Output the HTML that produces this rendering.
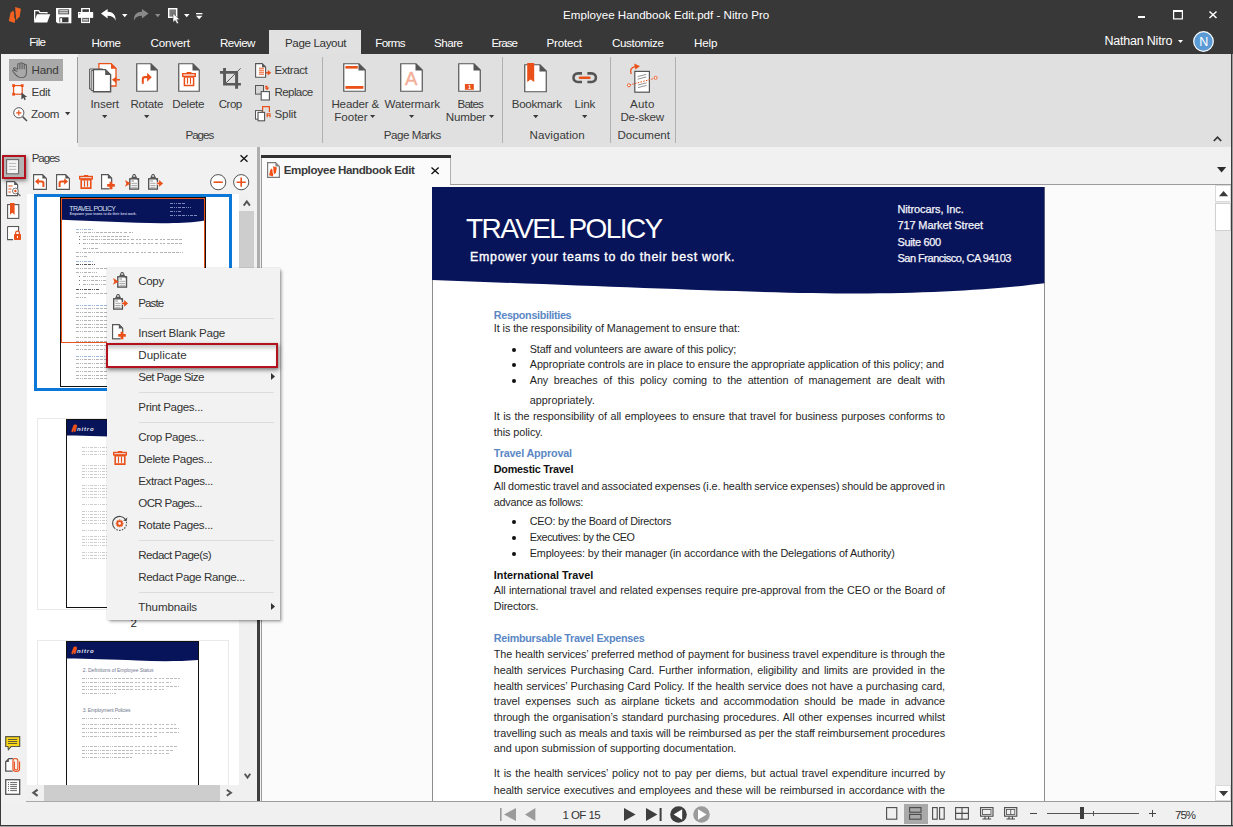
<!DOCTYPE html>
<html><head><meta charset="utf-8"><title>Employee Handbook Edit.pdf - Nitro Pro</title>
<style>
*{box-sizing:border-box;margin:0;padding:0}
html,body{width:1233px;height:827px;overflow:hidden;background:#f1f1f1;font-family:"Liberation Sans",sans-serif;font-size:12px;color:#333}
.a{position:absolute}
.t{position:absolute;white-space:nowrap;line-height:1}
svg{overflow:visible}
</style></head><body>
<div class="a" style="left:0px;top:0px;width:1233px;height:53.6px;background:#383838;"></div>
<div class="t" style="left:563.10px;top:9.00px;font-size:11.6px;color:#ffffff;">Employee Handbook Edit.pdf - Nitro Pro</div>
<div class="t" style="left:29.30px;top:36.00px;font-size:11.6px;color:#ffffff;letter-spacing:-0.664px;">File</div>
<div class="t" style="left:91.50px;top:37.00px;font-size:11.6px;color:#ffffff;letter-spacing:-0.481px;">Home</div>
<div class="t" style="left:150.50px;top:37.00px;font-size:11.6px;color:#ffffff;letter-spacing:-0.186px;">Convert</div>
<div class="t" style="left:220.00px;top:37.00px;font-size:11.6px;color:#ffffff;letter-spacing:-0.507px;">Review</div>
<div class="a" style="left:269px;top:30px;width:92px;height:24px;background:#e1e1e1;"></div>
<div class="t" style="left:285.00px;top:37.00px;font-size:11.6px;color:#333;letter-spacing:-0.364px;">Page Layout</div>
<div class="t" style="left:375.30px;top:37.00px;font-size:11.6px;color:#ffffff;letter-spacing:-0.641px;">Forms</div>
<div class="t" style="left:434.00px;top:37.00px;font-size:11.6px;color:#ffffff;letter-spacing:-0.489px;">Share</div>
<div class="t" style="left:491.50px;top:37.00px;font-size:11.6px;color:#ffffff;letter-spacing:-0.951px;">Erase</div>
<div class="t" style="left:546.50px;top:37.00px;font-size:11.6px;color:#ffffff;letter-spacing:-0.208px;">Protect</div>
<div class="t" style="left:612.00px;top:37.00px;font-size:11.6px;color:#ffffff;letter-spacing:-0.349px;">Customize</div>
<div class="t" style="left:694.00px;top:37.00px;font-size:11.6px;color:#ffffff;letter-spacing:-0.119px;">Help</div>
<div class="t" style="left:1104.40px;top:35.00px;font-size:12.5px;color:#ffffff;letter-spacing:-0.197px;">Nathan Nitro</div>
<svg class="a" style="left:1178px;top:39.5px;" width="5" height="3" viewBox="0 0 5 3"><path d="M0 0H5 L2.5 3Z" fill="#ffffff"/></svg>
<svg class="a" style="left:1193px;top:30.5px;" width="21" height="21" viewBox="0 0 21 21"><circle cx="10.5" cy="10.5" r="9.8" fill="#5b9bd5" stroke="#fff" stroke-width="1.2"/></svg>
<div class="t" style="left:1199.30px;top:36.00px;font-size:12.5px;color:#ffffff;">N</div>
<div class="a" style="left:1138px;top:15.5px;width:6.5px;height:2.5px;background:#ffffff;"></div>
<svg class="a" style="left:1172.5px;top:10px;" width="10" height="9.5" viewBox="0 0 10 9.5"><rect x="0.6" y="1" width="8.8" height="7.9" fill="none" stroke="#fff" stroke-width="1.2"/><rect x="0" y="0" width="10" height="2" fill="#fff"/></svg>
<svg class="a" style="left:1209px;top:10.5px;" width="8" height="7.5" viewBox="0 0 8 7.5"><path d="M0.5 0.5L7.5 7M7.5 0.5L0.5 7" stroke="#fff" stroke-width="1.5" fill="none"/></svg>
<div class="a" style="left:0px;top:54px;width:1233px;height:93px;background:#e0e0e0;"></div>
<div class="a" style="left:0px;top:54px;width:78px;height:93px;background:#f2f2f2;"></div>
<div class="a" style="left:77px;top:57px;width:1px;height:86px;background:#9c9c9c;"></div>
<div class="a" style="left:322px;top:57px;width:1px;height:86px;background:#b0b0b0;"></div>
<div class="a" style="left:502px;top:57px;width:1px;height:86px;background:#b0b0b0;"></div>
<div class="a" style="left:610px;top:57px;width:1px;height:86px;background:#b0b0b0;"></div>
<div class="a" style="left:675px;top:57px;width:1px;height:86px;background:#b0b0b0;"></div>
<div class="a" style="left:9px;top:59px;width:54px;height:21.8px;background:#a9a9a9;"></div>
<div class="t" style="left:31.50px;top:64.00px;font-size:11.6px;color:#3a3a3a;letter-spacing:-0.177px;">Hand</div>
<div class="t" style="left:31.50px;top:86.00px;font-size:11.6px;color:#3a3a3a;letter-spacing:-0.296px;">Edit</div>
<div class="t" style="left:31.00px;top:108.00px;font-size:11.6px;color:#3a3a3a;letter-spacing:-0.384px;">Zoom</div>
<svg class="a" style="left:64.95px;top:112px;" width="5.3" height="3.15" viewBox="0 0 5.3 3.15"><path d="M0 0H5.3 L2.65 3.15Z" fill="#3a3a3a"/></svg>
<div class="t" style="left:90.50px;top:98.00px;font-size:11.6px;color:#3a3a3a;letter-spacing:-0.102px;">Insert</div>
<svg class="a" style="left:101.8px;top:115.2px;" width="5.4" height="3.2" viewBox="0 0 5.4 3.2"><path d="M0 0H5.4 L2.7 3.2Z" fill="#3a3a3a"/></svg>
<div class="t" style="left:130.40px;top:98.00px;font-size:11.6px;color:#3a3a3a;letter-spacing:-0.215px;">Rotate</div>
<svg class="a" style="left:143.7px;top:115.2px;" width="5.4" height="3.2" viewBox="0 0 5.4 3.2"><path d="M0 0H5.4 L2.7 3.2Z" fill="#3a3a3a"/></svg>
<div class="t" style="left:172.30px;top:98.00px;font-size:11.6px;color:#3a3a3a;letter-spacing:-0.266px;">Delete</div>
<div class="t" style="left:218.70px;top:98.00px;font-size:11.6px;color:#3a3a3a;letter-spacing:-0.515px;">Crop</div>
<div class="t" style="left:185.40px;top:129.00px;font-size:11.6px;color:#3a3a3a;letter-spacing:-0.998px;">Pages</div>
<div class="t" style="left:274.50px;top:64.00px;font-size:11.6px;color:#3a3a3a;letter-spacing:-0.466px;">Extract</div>
<div class="t" style="left:274.50px;top:86.00px;font-size:11.6px;color:#3a3a3a;letter-spacing:-0.627px;">Replace</div>
<div class="t" style="left:274.50px;top:108.00px;font-size:11.6px;color:#3a3a3a;letter-spacing:-0.142px;">Split</div>
<div class="t" style="left:331.40px;top:98.00px;font-size:11.6px;color:#3a3a3a;letter-spacing:-0.158px;">Header &amp;</div>
<div class="t" style="left:334.30px;top:111.00px;font-size:11.6px;color:#3a3a3a;letter-spacing:-0.045px;">Footer</div>
<svg class="a" style="left:370.2px;top:115px;" width="5.2" height="3.1" viewBox="0 0 5.2 3.1"><path d="M0 0H5.2 L2.6 3.1Z" fill="#3a3a3a"/></svg>
<div class="t" style="left:384.50px;top:98.00px;font-size:11.6px;color:#3a3a3a;letter-spacing:-0.098px;">Watermark</div>
<svg class="a" style="left:408.9px;top:115px;" width="5.2" height="3.1" viewBox="0 0 5.2 3.1"><path d="M0 0H5.2 L2.6 3.1Z" fill="#3a3a3a"/></svg>
<div class="t" style="left:457.50px;top:98.00px;font-size:11.6px;color:#3a3a3a;letter-spacing:-0.841px;">Bates</div>
<div class="t" style="left:445.80px;top:111.00px;font-size:11.6px;color:#3a3a3a;letter-spacing:-0.212px;">Number</div>
<svg class="a" style="left:489px;top:115px;" width="5.2" height="3.1" viewBox="0 0 5.2 3.1"><path d="M0 0H5.2 L2.6 3.1Z" fill="#3a3a3a"/></svg>
<div class="t" style="left:383.80px;top:129.00px;font-size:11.6px;color:#3a3a3a;letter-spacing:-0.477px;">Page Marks</div>
<div class="t" style="left:511.70px;top:98.00px;font-size:11.6px;color:#3a3a3a;letter-spacing:-0.274px;">Bookmark</div>
<svg class="a" style="left:532.8px;top:115.2px;" width="5.4" height="3.2" viewBox="0 0 5.4 3.2"><path d="M0 0H5.4 L2.7 3.2Z" fill="#3a3a3a"/></svg>
<div class="t" style="left:574.50px;top:98.00px;font-size:11.6px;color:#3a3a3a;letter-spacing:-0.193px;">Link</div>
<svg class="a" style="left:581.7px;top:115.2px;" width="5.4" height="3.2" viewBox="0 0 5.4 3.2"><path d="M0 0H5.4 L2.7 3.2Z" fill="#3a3a3a"/></svg>
<div class="t" style="left:529.60px;top:129.00px;font-size:11.6px;color:#3a3a3a;letter-spacing:0.032px;">Navigation</div>
<div class="t" style="left:630.00px;top:98.00px;font-size:11.6px;color:#3a3a3a;letter-spacing:0.212px;">Auto</div>
<div class="t" style="left:620.40px;top:111.00px;font-size:11.6px;color:#3a3a3a;letter-spacing:-0.220px;">De-skew</div>
<div class="t" style="left:617.50px;top:129.00px;font-size:11.6px;color:#3a3a3a;letter-spacing:-0.053px;">Document</div>
<svg class="a" style="left:8px;top:6px;" width="14" height="17" viewBox="0 0 14 17"><path d="M7.1 1.05L12.9 2.8L11.7 10.5L8.3 14L7.7 8.6Z" fill="#f26322"/><path d="M5.1 4.5L2.5 6.7L0.8 14.9L6.6 16.9L7.3 13.5L6.1 10.5L6.2 7.1Z" fill="#f26322"/></svg>
<svg class="a" style="left:33.8px;top:9.7px;" width="16.4" height="12.6" viewBox="0 0 16.4 12.6"><path d="M0 12.4V0H4.9L6.3 2H13.6V3.6H12.2V3.2H5.6L4.3 1.3H1.3V9.6Z" fill="#fff"/><path d="M0 12.4L3 4.3H16.3L13.2 12.4Z" fill="#fff"/></svg>
<svg class="a" style="left:55.7px;top:7.7px;" width="15.4" height="15.3" viewBox="0 0 15.4 15.3"><path d="M0 0H15.4V15.3H1.6L0 13.7Z" fill="#fff"/><rect x="2.4" y="1.4" width="10.7" height="4.9" fill="#383838"/><rect x="3.2" y="2.3" width="9.1" height="1.1" fill="#fff"/><rect x="3.2" y="4.3" width="9.1" height="1.1" fill="#fff"/><rect x="3.4" y="9.3" width="9.1" height="5" fill="#383838"/><rect x="4.2" y="10.2" width="1.9" height="4.1" fill="#fff"/></svg>
<svg class="a" style="left:77.9px;top:7.9px;" width="15.2" height="15.1" viewBox="0 0 15.2 15.1"><rect x="3.1" y="0" width="8.9" height="4.6" fill="#fff"/><rect x="4.4" y="1.3" width="6.5" height="2.6" fill="#383838"/><rect x="0" y="4" width="15.2" height="5.9" fill="#fff"/><rect x="1.2" y="5.2" width="1" height="1" fill="#383838"/><rect x="3.1" y="8.6" width="8.9" height="6.5" fill="#fff"/><rect x="4.4" y="9.9" width="6.5" height="4" fill="#383838"/><rect x="5" y="10.8" width="5.3" height="0.9" fill="#fff"/><rect x="5" y="12.5" width="5.3" height="0.9" fill="#fff"/></svg>
<svg class="a" style="left:100.5px;top:9.4px;" width="15.5" height="12" viewBox="0 0 15.5 12"><path d="M0 4.6L6.6 0V2.8C11.5 2.8 15 5.8 14.6 11.8C13.6 8.4 10.6 6.8 6.6 6.8V9.4Z" fill="#fff"/></svg>
<svg class="a" style="left:121.85px;top:13.5px;" width="5.5" height="3.25" viewBox="0 0 5.5 3.25"><path d="M0 0H5.5 L2.75 3.25Z" fill="#fff"/></svg>
<svg class="a" style="left:132.5px;top:9.4px;" width="15.5" height="12" viewBox="0 0 15.5 12"><path d="M15.5 4.6L8.9 0V2.8C4 2.8 0.5 5.8 0.9 11.8C1.9 8.4 4.9 6.8 8.9 6.8V9.4Z" fill="#8a8a8a"/></svg>
<svg class="a" style="left:154.65px;top:13.5px;" width="5.5" height="3.25" viewBox="0 0 5.5 3.25"><path d="M0 0H5.5 L2.75 3.25Z" fill="#8a8a8a"/></svg>
<svg class="a" style="left:167.8px;top:7.7px;" width="12.5" height="16.3" viewBox="0 0 12.5 16.3"><rect x="0.7" y="0.7" width="8" height="8.6" fill="#7a7a7a" stroke="#fff" stroke-width="1.4"/><path d="M5 5.4L5 14.2L7.2 12.4L9 15.8L10.6 15L8.9 11.7L11.6 11.4Z" fill="#fff" stroke="#383838" stroke-width="0.5"/></svg>
<svg class="a" style="left:184.05px;top:13.5px;" width="5.5" height="3.25" viewBox="0 0 5.5 3.25"><path d="M0 0H5.5 L2.75 3.25Z" fill="#fff"/></svg>
<svg class="a" style="left:195.6px;top:12.6px;" width="6.4" height="6.4" viewBox="0 0 6.4 6.4"><rect x="0" y="0" width="6.4" height="1.3" fill="#fff"/><path d="M0 2.8H6.4L3.2 6.2Z" fill="#fff"/></svg>
<svg class="a" style="left:12.4px;top:61.6px;" width="15" height="17" viewBox="0 0 15 17"><path transform="scale(1.36,0.99)" d="M3.6 9.6L1.6 7.4C0.6 6.6 1.2 5.4 2.4 6L4.2 7.6V2.6C4.2 1.4 5.8 1.4 5.8 2.6V1.6C5.8 0.4 7.4 0.4 7.4 1.6V2.2C7.4 1 9 1 9 2.2V3.2C9 2.2 10.6 2.2 10.6 3.4V10.6C10.6 14 9 15.8 6.8 15.8C4.6 15.8 3.2 14 1.8 11.4L0.6 9.2C0.2 8.2 1.4 7.6 2 8.6Z M5.8 2.6V7.4M7.4 2.2V7.4M9 3.2V7.4" fill="none" stroke="#5a5a5a" stroke-width="0.75" stroke-linejoin="round"/></svg>
<svg class="a" style="left:11.5px;top:84px;" width="17" height="17" viewBox="0 0 17 17"><rect x="1.6" y="1.6" width="8.6" height="8.6" fill="#fff" stroke="#e9501a" stroke-width="1.2"/><rect x="0.2" y="0.2" width="2.8" height="2.8" fill="#e9501a"/><rect x="8.8" y="0.2" width="2.8" height="2.8" fill="#e9501a"/><rect x="0.2" y="8.8" width="2.8" height="2.8" fill="#e9501a"/><path d="M9.4 8.4V15.6L11.4 13.8L12.6 16.2L13.8 15.6L12.7 13.3L15.2 13.1Z" fill="#4a4a4a"/></svg>
<svg class="a" style="left:12.5px;top:106.5px;" width="15" height="15" viewBox="0 0 15 15"><circle cx="5.8" cy="5.8" r="5.1" fill="#fff" stroke="#555" stroke-width="1"/><path d="M9.6 9.6L14 14" stroke="#555" stroke-width="1.6"/><path d="M3.2 5.8H8.4M5.8 3.2V8.4" stroke="#e9501a" stroke-width="1.2"/></svg>
<svg class="a" style="left:89px;top:62.6px;" width="31.5" height="29.5" viewBox="0 0 31.5 29.5"><path d="M9.9 0.7H22.2L27 5.5V23H9.9Z" fill="#fff" stroke="#e9501a" stroke-width="1.3"/><path d="M22 0.4L27.4 5.8H22Z" fill="#e9501a"/><path d="M0.6 6H14V26H0.6Z" fill="#fff" stroke="#555555" stroke-width="1"/><path d="M2.2 7.6H16V27.6H2.2Z" fill="#fff" stroke="#555555" stroke-width="1"/><path d="M4.4 6.6H16.4L21.6 11.8V28.7H4.4Z" fill="#fff" stroke="#555555" stroke-width="1.4"/><path d="M16.2 6.2L22 12H16.2Z" fill="#555555"/><path d="M22.9 16.8L27.4 13.4V16.1H31V17.5H27.4V20.2Z" fill="#e9501a"/></svg>
<svg class="a" style="left:136.2px;top:63px;" width="22" height="29" viewBox="0 0 22 29"><path d="M0.75 0.75H15 L21.25 7 V28.25 H0.75Z" fill="#fff" stroke="#555555" stroke-width="1.2"/><path d="M14.5 0.5 L21.5 7.5 H14.5Z" fill="#555555"/><path d="M5.8 20.8V16.3C5.8 14 6.8 13 9 13H11.1V9.8L15.8 14.3L11.1 18.8V15.2H9.2C8.2 15.2 7.8 15.6 7.8 16.6V20.8Z" fill="#e9501a"/></svg>
<svg class="a" style="left:178px;top:63px;" width="22" height="29" viewBox="0 0 22 29"><path d="M0.75 0.75H15 L21.25 7 V28.25 H0.75Z" fill="#fff" stroke="#555555" stroke-width="1.2"/><path d="M14.5 0.5 L21.5 7.5 H14.5Z" fill="#555555"/><path d="M8.6 9H13.4V10.4H8.6Z" fill="#e9501a"/><rect x="4.7" y="10.7" width="12.6" height="2.6" fill="none" stroke="#e9501a" stroke-width="1.4"/><path d="M6.4 14H15.6V22.4H6.4Z" fill="none" stroke="#e9501a" stroke-width="1.5"/><path d="M9.5 15V20.8M12.5 15V20.8" stroke="#e9501a" stroke-width="1.1"/></svg>
<svg class="a" style="left:220px;top:68px;" width="21" height="21" viewBox="0 0 21 21"><path d="M3.1 0H6V15H20.9V17.6H3.1Z M0 3.1H18.1V20.8H15.1V5.8H0Z" fill="#595959"/><path d="M6.2 14.8L20.6 0.3" stroke="#595959" stroke-width="1"/></svg>
<svg class="a" style="left:255px;top:63.3px;" width="17" height="14.8" viewBox="0 0 17 14.8"><path d="M0.6 0.6H7.2L10.6 4V14.2H0.6Z" fill="#fff" stroke="#555555" stroke-width="1.1"/><path d="M7 0.4L10.8 4.2H7Z" fill="#555555"/><path d="M4 5.2H9M4 7.2H9M4 9.2H9M4 11.2H9" stroke="#e9501a" stroke-width="1"/><path d="M10.8 8.9H12.8V6.9L16.2 9.7L12.8 12.5V10.5H10.8Z" fill="#e9501a"/></svg>
<svg class="a" style="left:255px;top:84.5px;" width="15.5" height="15.5" viewBox="0 0 15.5 15.5"><rect x="0.5" y="0.5" width="8" height="8.6" fill="#d6d6d6" stroke="#555555" stroke-width="1"/><rect x="6.2" y="6.6" width="8.2" height="8.4" fill="#fff" stroke="#555555" stroke-width="1.1"/><path d="M10 0.8H12.6V2.6H14.4L12 5.2L9.6 2.6H11.4V2H10Z" fill="#e9501a"/></svg>
<svg class="a" style="left:255px;top:106.4px;" width="16.5" height="15.2" viewBox="0 0 16.5 15.2"><path d="M7.6 6V0.6H14.4V6" fill="none" stroke="#e9501a" stroke-width="1.2"/><rect x="0.5" y="4.6" width="6.6" height="8.6" fill="#fff" stroke="#555555" stroke-width="1"/><rect x="3" y="6.4" width="6.6" height="8.4" fill="#fff" stroke="#555555" stroke-width="1.1"/><path d="M11.6 7.2H15.6V11.2H14.4V9.8H12.8V11.2H11.6Z M12.8 8.2V8.9H14.4V8.2Z" fill="#e9501a" fill-rule="evenodd"/></svg>
<svg class="a" style="left:343px;top:63px;" width="23" height="29" viewBox="0 0 23 29"><path d="M0.75 0.75H16 L22.25 7 V28.25 H0.75Z" fill="#fff" stroke="#555555" stroke-width="1.2"/><path d="M15.5 0.5 L22.5 7.5 H15.5Z" fill="#555555"/><rect x="2.4" y="3" width="12.4" height="2.6" fill="#e9501a"/><rect x="2.4" y="23" width="18" height="2.8" fill="#e9501a"/></svg>
<svg class="a" style="left:400px;top:63px;" width="23" height="29" viewBox="0 0 23 29"><path d="M0.75 0.75H16 L22.25 7 V28.25 H0.75Z" fill="#fff" stroke="#555555" stroke-width="1.2"/><path d="M15.5 0.5 L22.5 7.5 H15.5Z" fill="#555555"/></svg>
<div class="t" style="left:405.00px;top:70.00px;font-size:18.6px;color:#f4ae98;-webkit-text-stroke:0.45px #f4ae98;">A</div>
<svg class="a" style="left:458px;top:63px;" width="23" height="29" viewBox="0 0 23 29"><path d="M0.75 0.75H16 L22.25 7 V28.25 H0.75Z" fill="#fff" stroke="#555555" stroke-width="1.2"/><path d="M15.5 0.5 L22.5 7.5 H15.5Z" fill="#555555"/><rect x="6.9" y="21" width="8.9" height="5.8" fill="#e9501a"/></svg>
<div class="t" style="left:467.90px;top:85.00px;font-size:5.6px;color:#fff;font-weight:bold;">1</div>
<svg class="a" style="left:524px;top:64px;" width="23" height="28.5" viewBox="0 0 23 28.5"><path d="M0.75 0.75H16 L22.25 7 V27.75 H0.75Z" fill="#fff" stroke="#555555" stroke-width="1.2"/><path d="M15.5 0.5 L22.5 7.5 H15.5Z" fill="#555555"/><path d="M3.2 -1H10.2V18L6.7 15.4L3.2 18Z" fill="#e9501a"/></svg>
<svg class="a" style="left:571.8px;top:71.8px;" width="25.4" height="11.4" viewBox="0 0 25.4 11.4"><path d="M10 1.4H6C0 1.4 0 10 6 10H10M15.4 1.4H19.4C25.4 1.4 25.4 10 19.4 10H15.4" fill="none" stroke="#555" stroke-width="2.6"/><path d="M8 5.7H17.4" stroke="#e9501a" stroke-width="2.6" stroke-linecap="round"/></svg>
<svg class="a" style="left:627px;top:62.5px;" width="31" height="30" viewBox="0 0 31 30"><rect x="7.8" y="8.4" width="14.6" height="20.8" fill="#fff" stroke="#555555" stroke-width="1.2"/><path d="M10.6 13.6L19.2 11.4M10.6 16.2L19.2 14M11 22L19.6 19.8M11 24.6L19.6 22.4" stroke="#777" stroke-width="0.8"/><path d="M2.6 22L28.2 15.2" stroke="#e9501a" stroke-width="1" stroke-dasharray="1.6 1.2"/><circle cx="1.9" cy="22.3" r="1.5" fill="#fff" stroke="#e9501a" stroke-width="0.9"/><circle cx="28.6" cy="14.8" r="1.5" fill="#fff" stroke="#e9501a" stroke-width="0.9"/><path d="M4.2 11C2.6 7 4.4 4.2 8 3.6" fill="none" stroke="#e9501a" stroke-width="1.4"/><path d="M7.2 0.6L13 3.2L8.2 6.6Z" fill="#e9501a"/></svg>
<svg class="a" style="left:1212.5px;top:135.5px;" width="9" height="5.5" viewBox="0 0 9 5.5"><path d="M0.8 5L4.5 1.2L8.2 5" fill="none" stroke="#333" stroke-width="1.7"/></svg>
<div class="a" style="left:26.5px;top:194px;width:212.5px;height:590.5px;background:#ffffff;"></div>
<div class="a" style="left:2.3px;top:155.3px;width:23.6px;height:23.4px;background:#b4b4b4;border:2px solid #b3111d;box-shadow:1px 2px 4px rgba(0,0,0,.45)"></div>
<svg class="a" style="left:6px;top:159.3px;" width="13.2" height="15.4" viewBox="0 0 13.2 15.4"><rect x="0.6" y="0.6" width="12" height="14.2" fill="#f4f4f4" stroke="#6a6a6a" stroke-width="1.1"/><path d="M3 4.4H10.2M3 7.4H10.2M3 10.4H10.2" stroke="#b9b9b9" stroke-width="1"/></svg>
<svg class="a" style="left:6px;top:181.3px;" width="15" height="16" viewBox="0 0 15 16"><path d="M0.6 0.6H8.4L11.6 3.8V14.6H0.6Z" fill="#fff" stroke="#555555" stroke-width="1.1"/><path d="M8.2 0.4L11.8 4H8.2Z" fill="#555555"/><path d="M2.4 5H6.6M2.4 8H5.4M2.4 11H5" stroke="#e9501a" stroke-width="1.2"/><circle cx="9.4" cy="10" r="2.9" fill="#fff" stroke="#666" stroke-width="0.9"/><circle cx="9.4" cy="10" r="1.2" fill="#e9501a"/><path d="M11.6 12.2L14.4 15" stroke="#666" stroke-width="1.2"/></svg>
<svg class="a" style="left:7px;top:203px;" width="12.4" height="16" viewBox="0 0 12.4 16"><rect x="0.6" y="1.6" width="11.2" height="13.8" fill="#fff" stroke="#555555" stroke-width="1.1"/><path d="M3 0H7.6V11.8L5.3 9.8L3 11.8Z" fill="#e9501a"/></svg>
<svg class="a" style="left:7px;top:226px;" width="14.5" height="14.5" viewBox="0 0 14.5 14.5"><path d="M0.6 0.6H11.6V6M6 13.6H0.6V0.6" fill="#fff" stroke="#555555" stroke-width="1.1"/><rect x="1.2" y="1.2" width="9.8" height="11.8" fill="#fff"/><rect x="7" y="8" width="7" height="6" rx="0.8" fill="#e9501a"/><path d="M8.6 8V6.8C8.6 4.6 12.4 4.6 12.4 6.8V8" fill="none" stroke="#e9501a" stroke-width="1.2"/><rect x="10" y="10" width="1" height="2" fill="#fff"/></svg>
<svg class="a" style="left:5px;top:736px;" width="15.4" height="14" viewBox="0 0 15.4 14"><path d="M0.7 0.7H14.7V10.5H6L3.4 13.6L3 10.5H0.7Z" fill="#f9d616" stroke="#5a5a4a" stroke-width="1.2" stroke-linejoin="miter"/><path d="M3 3.5H12.2M3 5.5H12.2M3 7.5H12.2" stroke="#5e5a35" stroke-width="1"/></svg>
<svg class="a" style="left:5px;top:757.8px;" width="15.4" height="14.2" viewBox="0 0 15.4 14.2"><path d="M8 13.2H0.7V3.8L3.8 0.7H8Z" fill="#fff"/><path d="M7.6 13.2H0.7V3.8L3.8 0.7H8" fill="none" stroke="#555555" stroke-width="1.3"/><path d="M0.6 3.9L3.9 0.6V3.9Z" fill="#555555"/><path d="M9.4 3.6V10.6C9.4 12.4 12.9 12.4 12.9 10.6V3C12.9 -0.3 7.9 -0.3 7.9 3V10.8C7.9 14.4 14.6 14.4 14.6 10.8V3.6" fill="none" stroke="#e9501a" stroke-width="1.1"/></svg>
<svg class="a" style="left:5px;top:779px;" width="15.4" height="16" viewBox="0 0 15.4 16"><rect x="0.7" y="0.7" width="14" height="14.6" fill="#fff" stroke="#555555" stroke-width="1.3"/><path d="M5.2 3.6H12M5.2 5.6H12M5.2 7.6H12M5.2 9.6H12M5.2 11.6H12" stroke="#555555" stroke-width="0.9"/><path d="M3 3.6H4M3 5.6H4M3 7.6H4M3 9.6H4M3 11.6H4" stroke="#555555" stroke-width="0.9"/></svg>
<div class="t" style="left:31.70px;top:152.00px;font-size:11.6px;color:#3a3a3a;letter-spacing:-1.098px;">Pages</div>
<svg class="a" style="left:240px;top:155.2px;" width="8" height="7" viewBox="0 0 8 7"><path d="M0.5 0.3L7.5 6.7M7.5 0.3L0.5 6.7" stroke="#111" stroke-width="1.3" fill="none"/></svg>
<svg class="a" style="left:33.2px;top:174px;" width="14" height="16" viewBox="0 0 14 16"><path d="M0.6 0.6H9.6L13.4 4.4V15.4H0.6Z" fill="#fff" stroke="#555555" stroke-width="1.1"/><path d="M9.4 0.4L13.6 4.6H9.4Z" fill="#555555"/><path d="M2 7.6L5.8 4.2V6.4H8.6C10.6 6.4 11.4 7.4 11.4 9V13H9.4V9.4C9.4 8.6 9.2 8.4 8.4 8.4H5.8V10.8Z" fill="#e9501a"/></svg>
<svg class="a" style="left:56.2px;top:174px;" width="14" height="16" viewBox="0 0 14 16"><path d="M0.6 0.6H9.6L13.4 4.4V15.4H0.6Z" fill="#fff" stroke="#555555" stroke-width="1.1"/><path d="M9.4 0.4L13.6 4.6H9.4Z" fill="#555555"/><path d="M12 7.6L8.2 4.2V6.4H5.4C3.4 6.4 2.6 7.4 2.6 9V13H4.6V9.4C4.6 8.6 4.8 8.4 5.6 8.4H8.2V10.8Z" fill="#e9501a"/></svg>
<svg class="a" style="left:79.2px;top:175px;" width="14" height="14" viewBox="0 0 14 14"><path d="M4.8 0H9.2V1.4H4.8Z" fill="#e9501a"/><rect x="0.7" y="1.5" width="12.6" height="2.4" fill="none" stroke="#e9501a" stroke-width="1.4"/><path d="M2.2 4.6H11.8V13.1H2.2Z" fill="none" stroke="#e9501a" stroke-width="1.6"/><path d="M5.5 5.6V11.8M8.5 5.6V11.8" stroke="#e9501a" stroke-width="1.1"/></svg>
<svg class="a" style="left:101px;top:174px;" width="13.6" height="15.6" viewBox="0 0 13.6 15.6"><path d="M8.6 14.8H0.6V0.6H7L10.6 4.2V8" fill="none" stroke="#555555" stroke-width="1.1"/><path d="M0.6 0.6H7L10.6 4.2V14.8H0.6Z" fill="#fff"/><path d="M8.6 14.8H0.6V0.6H7L10.6 4.2V8" fill="none" stroke="#555555" stroke-width="1.1"/><path d="M6.8 0.4L10.8 4.4H6.8Z" fill="#555555"/><path d="M8.6 7.8H11.4V10H13.8V12.8H11.4V15.2H8.6V12.8H6.2V10H8.6Z" fill="#e9501a"/></svg>
<svg class="a" style="left:124.9px;top:173.9px;" width="14.2" height="15.9" viewBox="0 0 14.2 15.9"><rect x="4.8" y="4.8" width="8.7" height="10.3" fill="#fff" stroke="#555555" stroke-width="1.4"/><path d="M6.1 4.6L7.5 1.2C7.9 -0.3 10.5 -0.3 10.9 1.2L12.3 4.6Z" fill="#555555"/><rect x="8.2" y="1.1" width="2" height="1.9" fill="#c4c4c4"/><path d="M11.3 4.6H13.8V7.1Z" fill="#555555"/><rect x="6.4" y="6.3" width="2.6" height="1.4" fill="#aaa"/><path d="M6.4 9.3H12M6.4 11.4H12M6.4 13.3H12" stroke="#999" stroke-width="0.9"/><path d="M0 6L5.7 9.4L0 12.8L1.3 9.4Z" fill="#e9501a"/></svg>
<svg class="a" style="left:147.8px;top:173.9px;" width="15.2" height="15.9" viewBox="0 0 15.2 15.9"><rect x="0.7" y="4.8" width="8.7" height="10.3" fill="#fff" stroke="#555555" stroke-width="1.4"/><path d="M2 4.6L3.4 1.2C3.8 -0.3 6.4 -0.3 6.8 1.2L8.2 4.6Z" fill="#555555"/><rect x="4.1" y="1.1" width="2" height="1.9" fill="#c4c4c4"/><path d="M7.2 4.6H9.7V7.1Z" fill="#555555"/><rect x="2.3" y="6.3" width="2.6" height="1.4" fill="#aaa"/><path d="M2.3 9.3H7.6M2.3 11.4H7.6M2.3 13.3H7.6" stroke="#999" stroke-width="0.9"/><rect x="8.6" y="8" width="3" height="2.8" fill="#f2f2f2"/><path d="M9 8.6H11.1V6L15.1 9.4L11.1 12.8V10.2H9Z" fill="#e9501a"/></svg>
<svg class="a" style="left:210px;top:173.8px;" width="16.4" height="16.4" viewBox="0 0 16.4 16.4"><circle cx="8.2" cy="8.2" r="7.6" fill="#fff" stroke="#3c3c3c" stroke-width="0.9"/><path d="M3.6 8.2H12.8" stroke="#e9501a" stroke-width="1.6"/></svg>
<svg class="a" style="left:233px;top:173.8px;" width="16.4" height="16.4" viewBox="0 0 16.4 16.4"><circle cx="8.2" cy="8.2" r="7.6" fill="#fff" stroke="#3c3c3c" stroke-width="0.9"/><path d="M3.6 8.2H12.8M8.2 3.6V12.8" stroke="#e9501a" stroke-width="1.6"/></svg>
<div class="a" style="left:239px;top:194px;width:15.3px;height:590.5px;background:#f0f0f0;"></div>
<div class="a" style="left:239.2px;top:211px;width:14.8px;height:120px;background:#cdcdcd;"></div>
<svg class="a" style="left:243px;top:200px;" width="7.6" height="6.4" viewBox="0 0 7.6 6.4"><path d="M0.7 5.6L3.8 1.4L6.9 5.6" fill="none" stroke="#555" stroke-width="1.9"/></svg>
<svg class="a" style="left:243.6px;top:773px;" width="7" height="6" viewBox="0 0 7 6"><path d="M0.7 0.8L3.5 4.6L6.3 0.8" fill="none" stroke="#555" stroke-width="1.9"/></svg>
<div class="a" style="left:26.5px;top:784.5px;width:228px;height:16px;background:#f0f0f0;"></div>
<div class="a" style="left:44.2px;top:785px;width:175.4px;height:15.5px;background:#cdcdcd;"></div>
<svg class="a" style="left:31.8px;top:789px;" width="6.4" height="7.4" viewBox="0 0 6.4 7.4"><path d="M5.6 0.6L1.4 3.7L5.6 6.8" fill="none" stroke="#555" stroke-width="2.1"/></svg>
<svg class="a" style="left:226.2px;top:789px;" width="6.4" height="7.4" viewBox="0 0 6.4 7.4"><path d="M0.8 0.7L5 3.7L0.8 6.7" fill="none" stroke="#555" stroke-width="1.9"/></svg>
<div class="a" style="left:26px;top:801px;width:236px;height:1px;background:#a8a8a8;"></div>
<div class="a" style="left:257px;top:147px;width:3px;height:125px;background:#aeaeae;"></div>
<div class="a" style="left:257px;top:272px;width:3px;height:529px;background:#3e3e3e;"></div>
<div class="a" style="left:34px;top:194px;width:198px;height:196.6px;border:3px solid #0b78d8;background:#fff"></div>
<div class="a" style="left:60px;top:197px;width:146px;height:190px;border:1.2px solid #111;background:#fff"></div>
<svg class="a" style="left:61.2px;top:198.2px;" width="143.6" height="26" viewBox="0 0 143.6 26"><path d="M0 0H143.6V22.6C130 25 118 25.4 100 25.2C70 24.8 30 23.2 0 21.8Z" fill="#08145a"/></svg>
<div class="a" style="left:61px;top:198px;width:144px;height:144.6px;border:1.2px solid #e9501a"></div>
<div class="t" style="left:69.30px;top:206.00px;font-size:6.9px;color:#dfe3f0;letter-spacing:-0.550px;">TRAVEL POLICY</div>
<div class="t" style="left:69.80px;top:213.00px;font-size:3.2px;color:#c5cbe2;letter-spacing:0.034px;font-weight:bold;">Empower your teams to do their best work.</div>
<div class="a" style="left:170px;top:203px;width:16px;height:0.9px;background:repeating-linear-gradient(90deg,transparent 0,transparent 5.2px,#08145a 5.2px,#08145a 5.9px),repeating-linear-gradient(90deg,#7f89bd 0,#7f89bd 3.1px,transparent 3.1px,transparent 4px)"></div>
<div class="a" style="left:170px;top:206.95px;width:21px;height:0.9px;background:repeating-linear-gradient(90deg,transparent 0,transparent 5.2px,#08145a 5.2px,#08145a 5.9px),repeating-linear-gradient(90deg,#7f89bd 0,#7f89bd 3.1px,transparent 3.1px,transparent 4px)"></div>
<div class="a" style="left:170px;top:210.9px;width:11px;height:0.9px;background:repeating-linear-gradient(90deg,transparent 0,transparent 5.2px,#08145a 5.2px,#08145a 5.9px),repeating-linear-gradient(90deg,#7f89bd 0,#7f89bd 3.1px,transparent 3.1px,transparent 4px)"></div>
<div class="a" style="left:170px;top:214.85px;width:28px;height:0.9px;background:repeating-linear-gradient(90deg,transparent 0,transparent 5.2px,#08145a 5.2px,#08145a 5.9px),repeating-linear-gradient(90deg,#7f89bd 0,#7f89bd 3.1px,transparent 3.1px,transparent 4px)"></div>
<div class="a" style="left:75.7px;top:228.5px;width:18px;height:1px;background:repeating-linear-gradient(90deg,transparent 0,transparent 5.2px,#fff 5.2px,#fff 5.9px),repeating-linear-gradient(90deg,#9db8e0 0,#9db8e0 3.1px,transparent 3.1px,transparent 4px)"></div>
<div class="a" style="left:75.7px;top:231.6px;width:57px;height:1px;background:repeating-linear-gradient(90deg,transparent 0,transparent 5.2px,#fff 5.2px,#fff 5.9px),repeating-linear-gradient(90deg,#b4b4b4 0,#b4b4b4 3.1px,transparent 3.1px,transparent 4px)"></div>
<div class="a" style="left:83px;top:235.6px;width:48px;height:1px;background:repeating-linear-gradient(90deg,transparent 0,transparent 5.2px,#fff 5.2px,#fff 5.9px),repeating-linear-gradient(90deg,#b4b4b4 0,#b4b4b4 3.1px,transparent 3.1px,transparent 4px)"></div>
<div class="a" style="left:83px;top:239.4px;width:100px;height:1px;background:repeating-linear-gradient(90deg,transparent 0,transparent 5.2px,#fff 5.2px,#fff 5.9px),repeating-linear-gradient(90deg,#b4b4b4 0,#b4b4b4 3.1px,transparent 3.1px,transparent 4px)"></div>
<div class="a" style="left:83px;top:243.2px;width:100px;height:1px;background:repeating-linear-gradient(90deg,transparent 0,transparent 5.2px,#fff 5.2px,#fff 5.9px),repeating-linear-gradient(90deg,#b4b4b4 0,#b4b4b4 3.1px,transparent 3.1px,transparent 4px)"></div>
<div class="a" style="left:83px;top:247.5px;width:15px;height:1px;background:repeating-linear-gradient(90deg,transparent 0,transparent 5.2px,#fff 5.2px,#fff 5.9px),repeating-linear-gradient(90deg,#b4b4b4 0,#b4b4b4 3.1px,transparent 3.1px,transparent 4px)"></div>
<div class="a" style="left:75.7px;top:251.8px;width:107px;height:1px;background:repeating-linear-gradient(90deg,transparent 0,transparent 5.2px,#fff 5.2px,#fff 5.9px),repeating-linear-gradient(90deg,#b4b4b4 0,#b4b4b4 3.1px,transparent 3.1px,transparent 4px)"></div>
<div class="a" style="left:75.7px;top:255.6px;width:11px;height:1px;background:repeating-linear-gradient(90deg,transparent 0,transparent 5.2px,#fff 5.2px,#fff 5.9px),repeating-linear-gradient(90deg,#b4b4b4 0,#b4b4b4 3.1px,transparent 3.1px,transparent 4px)"></div>
<div class="a" style="left:75.7px;top:260.6px;width:18px;height:1px;background:repeating-linear-gradient(90deg,transparent 0,transparent 5.2px,#fff 5.2px,#fff 5.9px),repeating-linear-gradient(90deg,#9db8e0 0,#9db8e0 3.1px,transparent 3.1px,transparent 4px)"></div>
<div class="a" style="left:75.7px;top:264.3px;width:19px;height:1px;background:repeating-linear-gradient(90deg,transparent 0,transparent 5.2px,#fff 5.2px,#fff 5.9px),repeating-linear-gradient(90deg,#555 0,#555 3.1px,transparent 3.1px,transparent 4px)"></div>
<div class="a" style="left:75.7px;top:268.2px;width:107px;height:1px;background:repeating-linear-gradient(90deg,transparent 0,transparent 5.2px,#fff 5.2px,#fff 5.9px),repeating-linear-gradient(90deg,#b4b4b4 0,#b4b4b4 3.1px,transparent 3.1px,transparent 4px)"></div>
<div class="a" style="left:75.7px;top:272px;width:21px;height:1px;background:repeating-linear-gradient(90deg,transparent 0,transparent 5.2px,#fff 5.2px,#fff 5.9px),repeating-linear-gradient(90deg,#b4b4b4 0,#b4b4b4 3.1px,transparent 3.1px,transparent 4px)"></div>
<div class="a" style="left:83px;top:276.4px;width:33px;height:1px;background:repeating-linear-gradient(90deg,transparent 0,transparent 5.2px,#fff 5.2px,#fff 5.9px),repeating-linear-gradient(90deg,#b4b4b4 0,#b4b4b4 3.1px,transparent 3.1px,transparent 4px)"></div>
<div class="a" style="left:83px;top:280.2px;width:25px;height:1px;background:repeating-linear-gradient(90deg,transparent 0,transparent 5.2px,#fff 5.2px,#fff 5.9px),repeating-linear-gradient(90deg,#b4b4b4 0,#b4b4b4 3.1px,transparent 3.1px,transparent 4px)"></div>
<div class="a" style="left:83px;top:284px;width:86px;height:1px;background:repeating-linear-gradient(90deg,transparent 0,transparent 5.2px,#fff 5.2px,#fff 5.9px),repeating-linear-gradient(90deg,#b4b4b4 0,#b4b4b4 3.1px,transparent 3.1px,transparent 4px)"></div>
<div class="a" style="left:75.7px;top:289.4px;width:24px;height:1px;background:repeating-linear-gradient(90deg,transparent 0,transparent 5.2px,#fff 5.2px,#fff 5.9px),repeating-linear-gradient(90deg,#555 0,#555 3.1px,transparent 3.1px,transparent 4px)"></div>
<div class="a" style="left:75.7px;top:293px;width:107px;height:1px;background:repeating-linear-gradient(90deg,transparent 0,transparent 5.2px,#fff 5.2px,#fff 5.9px),repeating-linear-gradient(90deg,#b4b4b4 0,#b4b4b4 3.1px,transparent 3.1px,transparent 4px)"></div>
<div class="a" style="left:75.7px;top:296.8px;width:10px;height:1px;background:repeating-linear-gradient(90deg,transparent 0,transparent 5.2px,#fff 5.2px,#fff 5.9px),repeating-linear-gradient(90deg,#b4b4b4 0,#b4b4b4 3.1px,transparent 3.1px,transparent 4px)"></div>
<div class="a" style="left:75.7px;top:304.6px;width:35px;height:1px;background:repeating-linear-gradient(90deg,transparent 0,transparent 5.2px,#fff 5.2px,#fff 5.9px),repeating-linear-gradient(90deg,#9db8e0 0,#9db8e0 3.1px,transparent 3.1px,transparent 4px)"></div>
<div class="a" style="left:75.7px;top:308.4px;width:107px;height:1px;background:repeating-linear-gradient(90deg,transparent 0,transparent 5.2px,#fff 5.2px,#fff 5.9px),repeating-linear-gradient(90deg,#b4b4b4 0,#b4b4b4 3.1px,transparent 3.1px,transparent 4px)"></div>
<div class="a" style="left:75.7px;top:312.2px;width:107px;height:1px;background:repeating-linear-gradient(90deg,transparent 0,transparent 5.2px,#fff 5.2px,#fff 5.9px),repeating-linear-gradient(90deg,#b4b4b4 0,#b4b4b4 3.1px,transparent 3.1px,transparent 4px)"></div>
<div class="a" style="left:75.7px;top:316px;width:107px;height:1px;background:repeating-linear-gradient(90deg,transparent 0,transparent 5.2px,#fff 5.2px,#fff 5.9px),repeating-linear-gradient(90deg,#b4b4b4 0,#b4b4b4 3.1px,transparent 3.1px,transparent 4px)"></div>
<div class="a" style="left:75.7px;top:319.8px;width:107px;height:1px;background:repeating-linear-gradient(90deg,transparent 0,transparent 5.2px,#fff 5.2px,#fff 5.9px),repeating-linear-gradient(90deg,#b4b4b4 0,#b4b4b4 3.1px,transparent 3.1px,transparent 4px)"></div>
<div class="a" style="left:75.7px;top:323.6px;width:107px;height:1px;background:repeating-linear-gradient(90deg,transparent 0,transparent 5.2px,#fff 5.2px,#fff 5.9px),repeating-linear-gradient(90deg,#b4b4b4 0,#b4b4b4 3.1px,transparent 3.1px,transparent 4px)"></div>
<div class="a" style="left:75.7px;top:327.4px;width:107px;height:1px;background:repeating-linear-gradient(90deg,transparent 0,transparent 5.2px,#fff 5.2px,#fff 5.9px),repeating-linear-gradient(90deg,#b4b4b4 0,#b4b4b4 3.1px,transparent 3.1px,transparent 4px)"></div>
<div class="a" style="left:75.7px;top:331.2px;width:57px;height:1px;background:repeating-linear-gradient(90deg,transparent 0,transparent 5.2px,#fff 5.2px,#fff 5.9px),repeating-linear-gradient(90deg,#b4b4b4 0,#b4b4b4 3.1px,transparent 3.1px,transparent 4px)"></div>
<div class="a" style="left:75.7px;top:337.2px;width:107px;height:1px;background:repeating-linear-gradient(90deg,transparent 0,transparent 5.2px,#fff 5.2px,#fff 5.9px),repeating-linear-gradient(90deg,#b4b4b4 0,#b4b4b4 3.1px,transparent 3.1px,transparent 4px)"></div>
<div class="a" style="left:75.7px;top:341px;width:107px;height:1px;background:repeating-linear-gradient(90deg,transparent 0,transparent 5.2px,#fff 5.2px,#fff 5.9px),repeating-linear-gradient(90deg,#b4b4b4 0,#b4b4b4 3.1px,transparent 3.1px,transparent 4px)"></div>
<div class="a" style="left:75.7px;top:344.8px;width:107px;height:1px;background:repeating-linear-gradient(90deg,transparent 0,transparent 5.2px,#fff 5.2px,#fff 5.9px),repeating-linear-gradient(90deg,#b4b4b4 0,#b4b4b4 3.1px,transparent 3.1px,transparent 4px)"></div>
<div class="a" style="left:75.7px;top:348.6px;width:40px;height:1px;background:repeating-linear-gradient(90deg,transparent 0,transparent 5.2px,#fff 5.2px,#fff 5.9px),repeating-linear-gradient(90deg,#b4b4b4 0,#b4b4b4 3.1px,transparent 3.1px,transparent 4px)"></div>
<div class="a" style="left:75.7px;top:355.5px;width:40px;height:1px;background:repeating-linear-gradient(90deg,transparent 0,transparent 5.2px,#fff 5.2px,#fff 5.9px),repeating-linear-gradient(90deg,#9db8e0 0,#9db8e0 3.1px,transparent 3.1px,transparent 4px)"></div>
<div class="a" style="left:75.7px;top:359.3px;width:107px;height:1px;background:repeating-linear-gradient(90deg,transparent 0,transparent 5.2px,#fff 5.2px,#fff 5.9px),repeating-linear-gradient(90deg,#b4b4b4 0,#b4b4b4 3.1px,transparent 3.1px,transparent 4px)"></div>
<div class="a" style="left:75.7px;top:363.1px;width:107px;height:1px;background:repeating-linear-gradient(90deg,transparent 0,transparent 5.2px,#fff 5.2px,#fff 5.9px),repeating-linear-gradient(90deg,#b4b4b4 0,#b4b4b4 3.1px,transparent 3.1px,transparent 4px)"></div>
<div class="a" style="left:75.7px;top:366.9px;width:107px;height:1px;background:repeating-linear-gradient(90deg,transparent 0,transparent 5.2px,#fff 5.2px,#fff 5.9px),repeating-linear-gradient(90deg,#b4b4b4 0,#b4b4b4 3.1px,transparent 3.1px,transparent 4px)"></div>
<div class="a" style="left:75.7px;top:370.7px;width:107px;height:1px;background:repeating-linear-gradient(90deg,transparent 0,transparent 5.2px,#fff 5.2px,#fff 5.9px),repeating-linear-gradient(90deg,#b4b4b4 0,#b4b4b4 3.1px,transparent 3.1px,transparent 4px)"></div>
<div class="a" style="left:75.7px;top:374.5px;width:107px;height:1px;background:repeating-linear-gradient(90deg,transparent 0,transparent 5.2px,#fff 5.2px,#fff 5.9px),repeating-linear-gradient(90deg,#b4b4b4 0,#b4b4b4 3.1px,transparent 3.1px,transparent 4px)"></div>
<div class="a" style="left:75.7px;top:378.3px;width:60px;height:1px;background:repeating-linear-gradient(90deg,transparent 0,transparent 5.2px,#fff 5.2px,#fff 5.9px),repeating-linear-gradient(90deg,#b4b4b4 0,#b4b4b4 3.1px,transparent 3.1px,transparent 4px)"></div>
<div class="a" style="left:79px;top:235.6px;width:1px;height:1px;background:#777;"></div>
<div class="a" style="left:79px;top:239.4px;width:1px;height:1px;background:#777;"></div>
<div class="a" style="left:79px;top:243.2px;width:1px;height:1px;background:#777;"></div>
<div class="a" style="left:79px;top:276.4px;width:1px;height:1px;background:#777;"></div>
<div class="a" style="left:79px;top:280.2px;width:1px;height:1px;background:#777;"></div>
<div class="a" style="left:79px;top:284px;width:1px;height:1px;background:#777;"></div>
<div class="a" style="left:37px;top:418px;width:192px;height:191.6px;border:1px solid #e9e9e9;background:#fff"></div>
<div class="a" style="left:66px;top:419.2px;width:133.4px;height:189px;border:1.2px solid #111;background:#fff"></div>
<svg class="a" style="left:67.2px;top:420.4px;" width="131" height="19" viewBox="0 0 131 19"><path d="M0 0H131V17C110 18.6 90 18.4 70 17.4C45 16.2 20 15.6 0 15.4Z" fill="#08145a"/></svg>
<svg class="a" style="left:70.6px;top:424px;" width="6.4" height="8.8" viewBox="0 0 6 8"><path d="M2.4 0.8L4.6 0L5.8 1.4L4.4 7L2.6 7.6L3 5.2L1.6 7.8L0.2 6.6Z" fill="#e9501a"/></svg>
<div class="t" style="left:77.00px;top:426.00px;font-size:6px;color:#e6e8f2;letter-spacing:0.807px;font-style:italic;font-weight:bold;">nitro</div>
<div class="a" style="left:82px;top:446.6px;width:30px;height:1px;background:repeating-linear-gradient(90deg,transparent 0,transparent 5.2px,#fff 5.2px,#fff 5.9px),repeating-linear-gradient(90deg,#cdcdcd 0,#cdcdcd 3.1px,transparent 3.1px,transparent 4px)"></div>
<div class="a" style="left:82px;top:450.6px;width:28px;height:1px;background:repeating-linear-gradient(90deg,transparent 0,transparent 5.2px,#fff 5.2px,#fff 5.9px),repeating-linear-gradient(90deg,#cdcdcd 0,#cdcdcd 3.1px,transparent 3.1px,transparent 4px)"></div>
<div class="a" style="left:82px;top:453.6px;width:28px;height:1px;background:repeating-linear-gradient(90deg,transparent 0,transparent 5.2px,#fff 5.2px,#fff 5.9px),repeating-linear-gradient(90deg,#cdcdcd 0,#cdcdcd 3.1px,transparent 3.1px,transparent 4px)"></div>
<div class="a" style="left:82px;top:464.5px;width:28px;height:1px;background:repeating-linear-gradient(90deg,transparent 0,transparent 5.2px,#fff 5.2px,#fff 5.9px),repeating-linear-gradient(90deg,#cdcdcd 0,#cdcdcd 3.1px,transparent 3.1px,transparent 4px)"></div>
<div class="a" style="left:82px;top:467.5px;width:28px;height:1px;background:repeating-linear-gradient(90deg,transparent 0,transparent 5.2px,#fff 5.2px,#fff 5.9px),repeating-linear-gradient(90deg,#cdcdcd 0,#cdcdcd 3.1px,transparent 3.1px,transparent 4px)"></div>
<div class="a" style="left:82px;top:470.5px;width:28px;height:1px;background:repeating-linear-gradient(90deg,transparent 0,transparent 5.2px,#fff 5.2px,#fff 5.9px),repeating-linear-gradient(90deg,#cdcdcd 0,#cdcdcd 3.1px,transparent 3.1px,transparent 4px)"></div>
<div class="a" style="left:82px;top:473.5px;width:28px;height:1px;background:repeating-linear-gradient(90deg,transparent 0,transparent 5.2px,#fff 5.2px,#fff 5.9px),repeating-linear-gradient(90deg,#cdcdcd 0,#cdcdcd 3.1px,transparent 3.1px,transparent 4px)"></div>
<div class="a" style="left:82px;top:476.5px;width:28px;height:1px;background:repeating-linear-gradient(90deg,transparent 0,transparent 5.2px,#fff 5.2px,#fff 5.9px),repeating-linear-gradient(90deg,#cdcdcd 0,#cdcdcd 3.1px,transparent 3.1px,transparent 4px)"></div>
<div class="a" style="left:82px;top:484.5px;width:28px;height:1px;background:repeating-linear-gradient(90deg,transparent 0,transparent 5.2px,#fff 5.2px,#fff 5.9px),repeating-linear-gradient(90deg,#cdcdcd 0,#cdcdcd 3.1px,transparent 3.1px,transparent 4px)"></div>
<div class="a" style="left:82px;top:487.5px;width:28px;height:1px;background:repeating-linear-gradient(90deg,transparent 0,transparent 5.2px,#fff 5.2px,#fff 5.9px),repeating-linear-gradient(90deg,#cdcdcd 0,#cdcdcd 3.1px,transparent 3.1px,transparent 4px)"></div>
<div class="a" style="left:82px;top:490.5px;width:28px;height:1px;background:repeating-linear-gradient(90deg,transparent 0,transparent 5.2px,#fff 5.2px,#fff 5.9px),repeating-linear-gradient(90deg,#cdcdcd 0,#cdcdcd 3.1px,transparent 3.1px,transparent 4px)"></div>
<div class="a" style="left:82px;top:493.5px;width:28px;height:1px;background:repeating-linear-gradient(90deg,transparent 0,transparent 5.2px,#fff 5.2px,#fff 5.9px),repeating-linear-gradient(90deg,#cdcdcd 0,#cdcdcd 3.1px,transparent 3.1px,transparent 4px)"></div>
<div class="a" style="left:82px;top:496.5px;width:28px;height:1px;background:repeating-linear-gradient(90deg,transparent 0,transparent 5.2px,#fff 5.2px,#fff 5.9px),repeating-linear-gradient(90deg,#cdcdcd 0,#cdcdcd 3.1px,transparent 3.1px,transparent 4px)"></div>
<div class="a" style="left:82px;top:504px;width:28px;height:1px;background:repeating-linear-gradient(90deg,transparent 0,transparent 5.2px,#fff 5.2px,#fff 5.9px),repeating-linear-gradient(90deg,#cdcdcd 0,#cdcdcd 3.1px,transparent 3.1px,transparent 4px)"></div>
<div class="a" style="left:82px;top:510.5px;width:28px;height:1px;background:repeating-linear-gradient(90deg,transparent 0,transparent 5.2px,#fff 5.2px,#fff 5.9px),repeating-linear-gradient(90deg,#cdcdcd 0,#cdcdcd 3.1px,transparent 3.1px,transparent 4px)"></div>
<div class="a" style="left:82px;top:513.5px;width:28px;height:1px;background:repeating-linear-gradient(90deg,transparent 0,transparent 5.2px,#fff 5.2px,#fff 5.9px),repeating-linear-gradient(90deg,#cdcdcd 0,#cdcdcd 3.1px,transparent 3.1px,transparent 4px)"></div>
<div class="a" style="left:82px;top:516.5px;width:28px;height:1px;background:repeating-linear-gradient(90deg,transparent 0,transparent 5.2px,#fff 5.2px,#fff 5.9px),repeating-linear-gradient(90deg,#cdcdcd 0,#cdcdcd 3.1px,transparent 3.1px,transparent 4px)"></div>
<div class="a" style="left:82px;top:519.5px;width:28px;height:1px;background:repeating-linear-gradient(90deg,transparent 0,transparent 5.2px,#fff 5.2px,#fff 5.9px),repeating-linear-gradient(90deg,#cdcdcd 0,#cdcdcd 3.1px,transparent 3.1px,transparent 4px)"></div>
<div class="a" style="left:82px;top:522.5px;width:28px;height:1px;background:repeating-linear-gradient(90deg,transparent 0,transparent 5.2px,#fff 5.2px,#fff 5.9px),repeating-linear-gradient(90deg,#cdcdcd 0,#cdcdcd 3.1px,transparent 3.1px,transparent 4px)"></div>
<div class="a" style="left:82px;top:529.5px;width:28px;height:1px;background:repeating-linear-gradient(90deg,transparent 0,transparent 5.2px,#fff 5.2px,#fff 5.9px),repeating-linear-gradient(90deg,#cdcdcd 0,#cdcdcd 3.1px,transparent 3.1px,transparent 4px)"></div>
<div class="a" style="left:82px;top:535.5px;width:28px;height:1px;background:repeating-linear-gradient(90deg,transparent 0,transparent 5.2px,#fff 5.2px,#fff 5.9px),repeating-linear-gradient(90deg,#cdcdcd 0,#cdcdcd 3.1px,transparent 3.1px,transparent 4px)"></div>
<div class="a" style="left:82px;top:538.5px;width:28px;height:1px;background:repeating-linear-gradient(90deg,transparent 0,transparent 5.2px,#fff 5.2px,#fff 5.9px),repeating-linear-gradient(90deg,#cdcdcd 0,#cdcdcd 3.1px,transparent 3.1px,transparent 4px)"></div>
<div class="a" style="left:82px;top:541.5px;width:28px;height:1px;background:repeating-linear-gradient(90deg,transparent 0,transparent 5.2px,#fff 5.2px,#fff 5.9px),repeating-linear-gradient(90deg,#cdcdcd 0,#cdcdcd 3.1px,transparent 3.1px,transparent 4px)"></div>
<div class="a" style="left:82px;top:544.5px;width:28px;height:1px;background:repeating-linear-gradient(90deg,transparent 0,transparent 5.2px,#fff 5.2px,#fff 5.9px),repeating-linear-gradient(90deg,#cdcdcd 0,#cdcdcd 3.1px,transparent 3.1px,transparent 4px)"></div>
<div class="a" style="left:82px;top:551.5px;width:28px;height:1px;background:repeating-linear-gradient(90deg,transparent 0,transparent 5.2px,#fff 5.2px,#fff 5.9px),repeating-linear-gradient(90deg,#cdcdcd 0,#cdcdcd 3.1px,transparent 3.1px,transparent 4px)"></div>
<div class="a" style="left:82px;top:554.5px;width:28px;height:1px;background:repeating-linear-gradient(90deg,transparent 0,transparent 5.2px,#fff 5.2px,#fff 5.9px),repeating-linear-gradient(90deg,#cdcdcd 0,#cdcdcd 3.1px,transparent 3.1px,transparent 4px)"></div>
<div class="a" style="left:82px;top:557.5px;width:28px;height:1px;background:repeating-linear-gradient(90deg,transparent 0,transparent 5.2px,#fff 5.2px,#fff 5.9px),repeating-linear-gradient(90deg,#cdcdcd 0,#cdcdcd 3.1px,transparent 3.1px,transparent 4px)"></div>
<div class="t" style="left:130.40px;top:617.00px;font-size:11.6px;color:#222;">2</div>
<div class="a" style="left:37px;top:639.6px;width:192px;height:160px;border:1px solid #e9e9e9;background:#fff"></div>
<div class="a" style="left:66px;top:641px;width:133.4px;height:160px;border:1.2px solid #111;background:#fff"></div>
<svg class="a" style="left:67.2px;top:642.2px;" width="131" height="20" viewBox="0 0 131 20"><path d="M0 0H131V18C110 19.6 90 19.4 70 18.4C45 17.2 20 16.6 0 16.4Z" fill="#08145a"/></svg>
<svg class="a" style="left:70.6px;top:645.8px;" width="6.4" height="8.8" viewBox="0 0 6 8"><path d="M2.4 0.8L4.6 0L5.8 1.4L4.4 7L2.6 7.6L3 5.2L1.6 7.8L0.2 6.6Z" fill="#e9501a"/></svg>
<div class="t" style="left:77.00px;top:648.00px;font-size:6px;color:#e6e8f2;letter-spacing:0.807px;font-style:italic;font-weight:bold;">nitro</div>
<div class="t" style="left:82.80px;top:668.00px;font-size:5px;color:#73788f;letter-spacing:-0.092px;">2. Definitions of Employee Status</div>
<div class="a" style="left:82.4px;top:678px;width:98px;height:1px;background:repeating-linear-gradient(90deg,transparent 0,transparent 5.2px,#fff 5.2px,#fff 5.9px),repeating-linear-gradient(90deg,#bdbdbd 0,#bdbdbd 3.1px,transparent 3.1px,transparent 4px)"></div>
<div class="a" style="left:82.4px;top:681.75px;width:88.5px;height:1px;background:repeating-linear-gradient(90deg,transparent 0,transparent 5.2px,#fff 5.2px,#fff 5.9px),repeating-linear-gradient(90deg,#bdbdbd 0,#bdbdbd 3.1px,transparent 3.1px,transparent 4px)"></div>
<div class="a" style="left:82.4px;top:685.5px;width:97px;height:1px;background:repeating-linear-gradient(90deg,transparent 0,transparent 5.2px,#fff 5.2px,#fff 5.9px),repeating-linear-gradient(90deg,#bdbdbd 0,#bdbdbd 3.1px,transparent 3.1px,transparent 4px)"></div>
<div class="a" style="left:82.4px;top:689.25px;width:83.5px;height:1px;background:repeating-linear-gradient(90deg,transparent 0,transparent 5.2px,#fff 5.2px,#fff 5.9px),repeating-linear-gradient(90deg,#bdbdbd 0,#bdbdbd 3.1px,transparent 3.1px,transparent 4px)"></div>
<div class="a" style="left:82.4px;top:693px;width:34px;height:1px;background:repeating-linear-gradient(90deg,transparent 0,transparent 5.2px,#fff 5.2px,#fff 5.9px),repeating-linear-gradient(90deg,#bdbdbd 0,#bdbdbd 3.1px,transparent 3.1px,transparent 4px)"></div>
<div class="t" style="left:82.80px;top:708.00px;font-size:5px;color:#73788f;letter-spacing:-0.203px;">3. Employment Policies</div>
<div class="a" style="left:82.4px;top:718.4px;width:38px;height:1px;background:repeating-linear-gradient(90deg,transparent 0,transparent 5.2px,#fff 5.2px,#fff 5.9px),repeating-linear-gradient(90deg,#bdbdbd 0,#bdbdbd 3.1px,transparent 3.1px,transparent 4px)"></div>
<div class="a" style="left:82.4px;top:724.4px;width:94px;height:1px;background:repeating-linear-gradient(90deg,transparent 0,transparent 5.2px,#fff 5.2px,#fff 5.9px),repeating-linear-gradient(90deg,#bdbdbd 0,#bdbdbd 3.1px,transparent 3.1px,transparent 4px)"></div>
<div class="a" style="left:82.4px;top:728.3px;width:97px;height:1px;background:repeating-linear-gradient(90deg,transparent 0,transparent 5.2px,#fff 5.2px,#fff 5.9px),repeating-linear-gradient(90deg,#bdbdbd 0,#bdbdbd 3.1px,transparent 3.1px,transparent 4px)"></div>
<div class="a" style="left:82.4px;top:732.2px;width:97px;height:1px;background:repeating-linear-gradient(90deg,transparent 0,transparent 5.2px,#fff 5.2px,#fff 5.9px),repeating-linear-gradient(90deg,#bdbdbd 0,#bdbdbd 3.1px,transparent 3.1px,transparent 4px)"></div>
<div class="a" style="left:82.4px;top:736.1px;width:77px;height:1px;background:repeating-linear-gradient(90deg,transparent 0,transparent 5.2px,#fff 5.2px,#fff 5.9px),repeating-linear-gradient(90deg,#bdbdbd 0,#bdbdbd 3.1px,transparent 3.1px,transparent 4px)"></div>
<div class="a" style="left:82.4px;top:745.6px;width:95px;height:1px;background:repeating-linear-gradient(90deg,transparent 0,transparent 5.2px,#fff 5.2px,#fff 5.9px),repeating-linear-gradient(90deg,#bdbdbd 0,#bdbdbd 3.1px,transparent 3.1px,transparent 4px)"></div>
<div class="a" style="left:82.4px;top:749.5px;width:91px;height:1px;background:repeating-linear-gradient(90deg,transparent 0,transparent 5.2px,#fff 5.2px,#fff 5.9px),repeating-linear-gradient(90deg,#bdbdbd 0,#bdbdbd 3.1px,transparent 3.1px,transparent 4px)"></div>
<div class="a" style="left:82.4px;top:753.4px;width:88px;height:1px;background:repeating-linear-gradient(90deg,transparent 0,transparent 5.2px,#fff 5.2px,#fff 5.9px),repeating-linear-gradient(90deg,#bdbdbd 0,#bdbdbd 3.1px,transparent 3.1px,transparent 4px)"></div>
<div class="a" style="left:82.4px;top:757.3px;width:50px;height:1px;background:repeating-linear-gradient(90deg,transparent 0,transparent 5.2px,#fff 5.2px,#fff 5.9px),repeating-linear-gradient(90deg,#bdbdbd 0,#bdbdbd 3.1px,transparent 3.1px,transparent 4px)"></div>
<div class="a" style="left:26.5px;top:784.5px;width:212.5px;height:16px;background:#f0f0f0;"></div>
<div class="a" style="left:44.2px;top:785px;width:175.4px;height:15.5px;background:#cdcdcd;"></div>
<svg class="a" style="left:31.8px;top:789px;" width="6.4" height="7.4" viewBox="0 0 6.4 7.4"><path d="M5.6 0.6L1.4 3.7L5.6 6.8" fill="none" stroke="#555" stroke-width="2.1"/></svg>
<svg class="a" style="left:226.2px;top:789px;" width="6.4" height="7.4" viewBox="0 0 6.4 7.4"><path d="M0.8 0.7L5 3.7L0.8 6.7" fill="none" stroke="#555" stroke-width="1.9"/></svg>
<div class="a" style="left:261px;top:155px;width:972px;height:646px;background:#fbfbfb;"></div>
<div class="a" style="left:450px;top:147px;width:783px;height:37.5px;background:#f1f1f1;"></div>
<div class="a" style="left:261px;top:147px;width:189px;height:8px;background:#f1f1f1;"></div>
<div class="a" style="left:261px;top:155px;width:189.5px;height:3px;background:#333333;"></div>
<div class="a" style="left:261px;top:158px;width:1px;height:643px;background:#9a9a9a;"></div>
<div class="a" style="left:450px;top:158px;width:1px;height:27px;background:#b0b0b0;"></div>
<div class="a" style="left:450px;top:184px;width:781px;height:1px;background:#9c9c9c;"></div>
<div class="a" style="left:261px;top:801px;width:970px;height:1px;background:#9c9c9c;"></div>
<svg class="a" style="left:267.2px;top:162px;" width="13" height="16" viewBox="0 0 13 16"><path d="M0.6 0.6H8.6L12.4 4.4V15.4H0.6Z" fill="#fff" stroke="#7a7a7a" stroke-width="1.2"/><path d="M8.4 0.4L12.6 4.6H8.4Z" fill="#8a8a8a"/><g transform="translate(1.6,3.6) scale(0.64)"><path d="M7.1 1.05L12.9 2.8L11.7 10.5L8.3 14L7.7 8.6Z" fill="#f04e14"/><path d="M5.1 4.5L2.5 6.7L0.8 14.9L6.6 16.9L7.3 13.5L6.1 10.5L6.2 7.1Z" fill="#f04e14"/></g></svg>
<div class="t" style="left:283.70px;top:164.00px;font-size:11.6px;color:#3a3a3a;letter-spacing:-0.408px;font-weight:bold;">Employee Handbook Edit</div>
<svg class="a" style="left:431px;top:167px;" width="8.2" height="7.4" viewBox="0 0 8.2 7.4"><path d="M0.5 0.4L7.7 7M7.7 0.4L0.5 7" stroke="#111" stroke-width="1.3" fill="none"/></svg>
<svg class="a" style="left:1217px;top:166.8px;" width="9.2" height="5.4" viewBox="0 0 9.2 5.4"><path d="M0 0H9.2L4.6 5.4Z" fill="#2c2c2c"/></svg>
<div class="a" style="left:1215px;top:185px;width:15.6px;height:616px;background:#e9e9e9;"></div>
<div class="a" style="left:1215px;top:185px;width:15.6px;height:16.5px;background:#ffffff;border:1px solid #dadada;"></div>
<div class="a" style="left:1215px;top:202.8px;width:15.6px;height:28.4px;background:#ffffff;border:1px solid #d0d0d0;"></div>
<svg class="a" style="left:1219px;top:191px;" width="9.2" height="5.2" viewBox="0 0 9.2 5.2"><path d="M0 5.2H9.2L4.6 0Z" fill="#3a3a3a"/></svg>
<div class="a" style="left:1215px;top:784.5px;width:15.6px;height:16.5px;background:#ffffff;border:1px solid #dadada;"></div>
<svg class="a" style="left:1219px;top:791px;" width="9.2" height="5.2" viewBox="0 0 9.2 5.2"><path d="M0 0H9.2L4.6 5.2Z" fill="#3a3a3a"/></svg>
<div class="a" style="left:431.5px;top:186.5px;width:613.3px;height:614.5px;background:#ffffff;border-left:1px solid #8c8c8c;border-right:1px solid #8c8c8c;border-top:1px solid #8c8c8c;"></div>
<svg class="a" style="left:432px;top:187px;" width="612.4" height="108" viewBox="0 0 612.4 108"><path d="M0 0H612.4V96.3C568 102 498 106.5 425 106.5C328 106.5 168 99 0 93Z" fill="#08145a"/></svg>
<div class="t" style="left:466.00px;top:215.00px;font-size:28px;color:#fff;letter-spacing:-1.583px;">TRAVEL POLICY</div>
<div class="t" style="left:470.00px;top:251.00px;font-size:12.4px;color:#fff;letter-spacing:0.725px;-webkit-text-stroke:0.35px #fff;">Empower your teams to do their best work.</div>
<div class="t" style="left:897.40px;top:204.00px;font-size:11px;color:#f4f4fa;letter-spacing:-0.104px;-webkit-text-stroke:0.25px #f4f4fa;">Nitrocars, Inc.</div>
<div class="t" style="left:897.40px;top:220.00px;font-size:11px;color:#f4f4fa;letter-spacing:-0.108px;-webkit-text-stroke:0.25px #f4f4fa;">717 Market Street</div>
<div class="t" style="left:897.40px;top:237.00px;font-size:11px;color:#f4f4fa;letter-spacing:-0.348px;-webkit-text-stroke:0.25px #f4f4fa;">Suite 600</div>
<div class="t" style="left:897.40px;top:253.00px;font-size:11px;color:#f4f4fa;letter-spacing:-0.484px;-webkit-text-stroke:0.25px #f4f4fa;">San Francisco, CA 94103</div>
<div class="t" style="left:493.80px;top:310.00px;font-size:10.8px;color:#5b87c5;letter-spacing:-0.335px;font-weight:bold;">Responsibilities</div>
<div class="t" style="left:493.80px;top:323.00px;font-size:10.8px;color:#1f1f1f;letter-spacing:-0.078px;">It is the responsibility of Management to ensure that:</div>
<div class="a" style="left:512.1px;top:348.10px;width:3.8px;height:3.8px;border-radius:50%;background:#111"></div>
<div class="t" style="left:529.80px;top:344.00px;font-size:10.8px;color:#1f1f1f;letter-spacing:-0.127px;">Staff and volunteers are aware of this policy;</div>
<div class="a" style="left:512.1px;top:362.90px;width:3.8px;height:3.8px;border-radius:50%;background:#111"></div>
<div class="t" style="left:529.80px;top:359.00px;font-size:10.8px;color:#1f1f1f;letter-spacing:-0.067px;">Appropriate controls are in place to ensure the appropriate application of this policy; and</div>
<div class="a" style="left:512.1px;top:378.80px;width:3.8px;height:3.8px;border-radius:50%;background:#111"></div>
<div class="t" style="left:529.80px;top:375.00px;font-size:10.8px;color:#1f1f1f;letter-spacing:-0.078px;word-spacing:2.734px;">Any breaches of this policy coming to the attention of management are dealt with</div>
<div class="t" style="left:529.80px;top:395.00px;font-size:10.8px;color:#1f1f1f;letter-spacing:0.020px;">appropriately.</div>
<div class="t" style="left:493.80px;top:411.00px;font-size:10.8px;color:#1f1f1f;letter-spacing:-0.078px;word-spacing:0.738px;">It is the responsibility of all employees to ensure that travel for business purposes conforms to</div>
<div class="t" style="left:493.80px;top:427.00px;font-size:10.8px;color:#1f1f1f;letter-spacing:-0.056px;">this policy.</div>
<div class="t" style="left:493.80px;top:448.00px;font-size:10.8px;color:#5b87c5;letter-spacing:-0.166px;font-weight:bold;">Travel Approval</div>
<div class="t" style="left:493.80px;top:464.00px;font-size:10.8px;color:#111;letter-spacing:-0.231px;font-weight:bold;">Domestic Travel</div>
<div class="t" style="left:493.80px;top:481.00px;font-size:10.8px;color:#1f1f1f;letter-spacing:-0.078px;word-spacing:-0.496px;">All domestic travel and associated expenses (i.e. health service expenses) should be approved in</div>
<div class="t" style="left:493.80px;top:497.00px;font-size:10.8px;color:#1f1f1f;letter-spacing:-0.264px;">advance as follows:</div>
<div class="a" style="left:512.1px;top:520.30px;width:3.8px;height:3.8px;border-radius:50%;background:#111"></div>
<div class="t" style="left:529.80px;top:516.00px;font-size:10.8px;color:#1f1f1f;letter-spacing:-0.247px;">CEO: by the Board of Directors</div>
<div class="a" style="left:512.1px;top:536.20px;width:3.8px;height:3.8px;border-radius:50%;background:#111"></div>
<div class="t" style="left:529.80px;top:532.00px;font-size:10.8px;color:#1f1f1f;letter-spacing:-0.421px;">Executives: by the CEO</div>
<div class="a" style="left:512.1px;top:551.90px;width:3.8px;height:3.8px;border-radius:50%;background:#111"></div>
<div class="t" style="left:529.80px;top:548.00px;font-size:10.8px;color:#1f1f1f;letter-spacing:-0.131px;">Employees: by their manager (in accordance with the Delegations of Authority)</div>
<div class="t" style="left:493.80px;top:570.00px;font-size:10.8px;color:#111;letter-spacing:0.030px;font-weight:bold;">International Travel</div>
<div class="t" style="left:493.80px;top:585.00px;font-size:10.8px;color:#1f1f1f;letter-spacing:-0.078px;word-spacing:0.392px;">All international travel and related expenses require pre-approval from the CEO or the Board of</div>
<div class="t" style="left:493.80px;top:601.00px;font-size:10.8px;color:#1f1f1f;letter-spacing:-0.178px;">Directors.</div>
<div class="t" style="left:493.80px;top:633.00px;font-size:10.8px;color:#5b87c5;letter-spacing:-0.299px;font-weight:bold;">Reimbursable Travel Expenses</div>
<div class="t" style="left:493.80px;top:649.00px;font-size:10.8px;color:#1f1f1f;letter-spacing:-0.078px;word-spacing:0.176px;">The health services’ preferred method of payment for business travel expenditure is through the</div>
<div class="t" style="left:493.80px;top:665.00px;font-size:10.8px;color:#1f1f1f;letter-spacing:-0.078px;word-spacing:1.517px;">health services Purchasing Card. Further information, eligibility and limits are provided in the</div>
<div class="t" style="left:493.80px;top:681.00px;font-size:10.8px;color:#1f1f1f;letter-spacing:-0.078px;word-spacing:0.564px;">health services’ Purchasing Card Policy. If the health service does not have a purchasing card,</div>
<div class="t" style="left:493.80px;top:696.00px;font-size:10.8px;color:#1f1f1f;letter-spacing:-0.078px;word-spacing:2.636px;">travel expenses such as airplane tickets and accommodation should be made in advance</div>
<div class="t" style="left:493.80px;top:712.00px;font-size:10.8px;color:#1f1f1f;letter-spacing:-0.078px;word-spacing:1.031px;">through the organisation’s standard purchasing procedures. All other expenses incurred whilst</div>
<div class="t" style="left:493.80px;top:728.00px;font-size:10.8px;color:#1f1f1f;letter-spacing:-0.078px;word-spacing:0.066px;">travelling such as meals and taxis will be reimbursed as per the staff reimbursement procedures</div>
<div class="t" style="left:493.80px;top:743.00px;font-size:10.8px;color:#1f1f1f;letter-spacing:-0.037px;">and upon submission of supporting documentation.</div>
<div class="t" style="left:493.80px;top:768.00px;font-size:10.8px;color:#1f1f1f;letter-spacing:-0.078px;word-spacing:1.091px;">It is the health services’ policy not to pay per diems, but actual travel expenditure incurred by</div>
<div class="t" style="left:493.80px;top:785.00px;font-size:10.8px;color:#1f1f1f;letter-spacing:-0.078px;word-spacing:0.814px;">health service executives and employees and these will be reimbursed in accordance with the</div>
<div class="a" style="left:0px;top:802px;width:1233px;height:23px;background:#f0f0f0;"></div>
<svg class="a" style="left:500.2px;top:807.5px;" width="16.2" height="13" viewBox="0 0 16.2 13"><rect x="0" y="0" width="1.6" height="13" fill="#9b9b9b"/><path d="M16 0V13L4 6.5Z" fill="#9b9b9b"/></svg>
<svg class="a" style="left:525.4px;top:807.5px;" width="10.6" height="13" viewBox="0 0 10.6 13"><path d="M10.4 0V13L0 6.5Z" fill="#9b9b9b"/></svg>
<div class="t" style="left:562.50px;top:810.00px;font-size:11.5px;color:#333;letter-spacing:-0.558px;">1 OF 15</div>
<svg class="a" style="left:623.5px;top:807.5px;" width="11.6" height="13" viewBox="0 0 11.6 13"><path d="M0 0V13L11.6 6.5Z" fill="#3e3e3e"/></svg>
<svg class="a" style="left:646px;top:807.5px;" width="15.8" height="13" viewBox="0 0 15.8 13"><path d="M0 0V13L11.4 6.5Z" fill="#3e3e3e"/><rect x="13.6" y="0" width="2" height="13" fill="#3e3e3e"/></svg>
<svg class="a" style="left:669.5px;top:805.6px;" width="17" height="17" viewBox="0 0 17 17"><circle cx="8.5" cy="8.5" r="8.3" fill="#3e3e3e"/><path d="M12.2 3.3V13.7L3.6 8.5Z" fill="#fff"/></svg>
<svg class="a" style="left:693.4px;top:805.6px;" width="17" height="17" viewBox="0 0 17 17"><circle cx="8.5" cy="8.5" r="8.3" fill="#9b9b9b"/><path d="M5 3.3V13.7L13.6 8.5Z" fill="#fff"/></svg>
<svg class="a" style="left:886.2px;top:807.4px;" width="11.4" height="12.8" viewBox="0 0 11.4 12.8"><rect x="0.6" y="0.6" width="10.2" height="11.6" fill="none" stroke="#4a4a4a" stroke-width="1.1"/></svg>
<div class="a" style="left:904.4px;top:803.6px;width:23.6px;height:20.4px;background:#a9a9a9;"></div>
<svg class="a" style="left:909px;top:807.4px;" width="12.6" height="12.8" viewBox="0 0 12.6 12.8"><rect x="0.6" y="0.6" width="11.4" height="4.6" fill="none" stroke="#4a4a4a" stroke-width="1.1"/><rect x="0.6" y="7.4" width="11.4" height="4.8" fill="none" stroke="#4a4a4a" stroke-width="1.1"/></svg>
<svg class="a" style="left:932.4px;top:807.4px;" width="12.8" height="12.8" viewBox="0 0 12.8 12.8"><rect x="0.6" y="0.6" width="4.6" height="11.6" fill="none" stroke="#4a4a4a" stroke-width="1.1"/><rect x="7.6" y="0.6" width="4.6" height="11.6" fill="none" stroke="#4a4a4a" stroke-width="1.1"/></svg>
<svg class="a" style="left:955.3px;top:807.4px;" width="14" height="12.8" viewBox="0 0 14 12.8"><rect x="0.6" y="0.6" width="12.8" height="11.6" fill="none" stroke="#4a4a4a" stroke-width="1.1"/><path d="M7 0.6V12.2M0.6 6.4H13.4" stroke="#4a4a4a" stroke-width="1.1"/></svg>
<svg class="a" style="left:979.5px;top:807.4px;" width="13.6" height="12.8" viewBox="0 0 13.6 12.8"><rect x="0.6" y="0.6" width="12.4" height="8.6" fill="none" stroke="#4a4a4a" stroke-width="1.1"/><rect x="2.6" y="2.4" width="8.4" height="5" fill="none" stroke="#4a4a4a" stroke-width="0.8"/><path d="M5 9.4V11.6M8.6 9.4V11.6M2.4 12H11.2" stroke="#4a4a4a" stroke-width="1.1"/></svg>
<svg class="a" style="left:1003.9px;top:807.4px;" width="13.4" height="12.8" viewBox="0 0 13.4 12.8"><rect x="0.6" y="0.6" width="12.2" height="8.6" fill="none" stroke="#4a4a4a" stroke-width="1.1"/><rect x="2.6" y="2.4" width="8.2" height="5" fill="none" stroke="#4a4a4a" stroke-width="0.8"/><path d="M6.7 2.4V7.4" stroke="#4a4a4a" stroke-width="0.8"/><path d="M5 9.4V11.6M8.4 9.4V11.6M2.4 12H11" stroke="#4a4a4a" stroke-width="1.1"/></svg>
<div class="a" style="left:1029.8px;top:813.2px;width:7.2px;height:1.1px;background:#444;"></div>
<div class="a" style="left:1046.6px;top:813.2px;width:92.2px;height:1px;background:#555;"></div>
<div class="a" style="left:1080px;top:807.4px;width:4.2px;height:11.8px;background:#3e3e3e;"></div>
<div class="a" style="left:1093.4px;top:811px;width:1px;height:5.4px;background:#555;"></div>
<div class="a" style="left:1148.8px;top:813.3px;width:7.2px;height:1.1px;background:#444;"></div>
<div class="a" style="left:1151.8px;top:810.2px;width:1.1px;height:7.2px;background:#444;"></div>
<div class="t" style="left:1175.00px;top:810.00px;font-size:11.5px;color:#333;letter-spacing:-1.009px;">75%</div>
<div class="a" style="left:0px;top:54px;width:1.3px;height:773px;background:#3a3a3a;"></div>
<div class="a" style="left:1230.8px;top:54px;width:1.6px;height:773px;background:#3a3a3a;"></div>
<div class="a" style="left:1232.4px;top:54px;width:0.6px;height:773px;background:#9a9a9a;"></div>
<div class="a" style="left:0px;top:824.5px;width:1233px;height:1.7px;background:#383838;"></div>
<div class="a" style="left:0px;top:826.2px;width:1233px;height:0.8px;background:#a5a5a5;"></div>
<div class="a" style="left:107px;top:268.3px;width:173px;height:351.6px;background:#f2f2f2;box-shadow:1.5px 1.5px 3px rgba(0,0,0,.38), 0 0 1px rgba(0,0,0,.3)"></div>
<svg class="a" style="left:112.9px;top:272.1px;" width="14.2" height="15.9" viewBox="0 0 14.2 15.9"><rect x="4.8" y="4.8" width="8.7" height="10.3" fill="#fff" stroke="#555555" stroke-width="1.4"/><path d="M6.1 4.6L7.5 1.2C7.9 -0.3 10.5 -0.3 10.9 1.2L12.3 4.6Z" fill="#555555"/><rect x="8.2" y="1.1" width="2" height="1.9" fill="#c4c4c4"/><path d="M11.3 4.6H13.8V7.1Z" fill="#555555"/><rect x="6.4" y="6.3" width="2.6" height="1.4" fill="#aaa"/><path d="M6.4 9.3H12M6.4 11.4H12M6.4 13.3H12" stroke="#999" stroke-width="0.9"/><path d="M0 6L5.7 9.4L0 12.8L1.3 9.4Z" fill="#e9501a"/></svg>
<div class="t" style="left:138.30px;top:275.00px;font-size:11.6px;color:#333333;letter-spacing:-0.393px;">Copy</div>
<svg class="a" style="left:113px;top:294.1px;" width="15.2" height="15.9" viewBox="0 0 15.2 15.9"><rect x="0.7" y="4.8" width="8.7" height="10.3" fill="#fff" stroke="#555555" stroke-width="1.4"/><path d="M2 4.6L3.4 1.2C3.8 -0.3 6.4 -0.3 6.8 1.2L8.2 4.6Z" fill="#555555"/><rect x="4.1" y="1.1" width="2" height="1.9" fill="#c4c4c4"/><path d="M7.2 4.6H9.7V7.1Z" fill="#555555"/><rect x="2.3" y="6.3" width="2.6" height="1.4" fill="#aaa"/><path d="M2.3 9.3H7.6M2.3 11.4H7.6M2.3 13.3H7.6" stroke="#999" stroke-width="0.9"/><rect x="8.6" y="8" width="3" height="2.8" fill="#f2f2f2"/><path d="M9 8.6H11.1V6L15.1 9.4L11.1 12.8V10.2H9Z" fill="#e9501a"/></svg>
<div class="t" style="left:138.30px;top:297.00px;font-size:11.6px;color:#333333;letter-spacing:-0.941px;">Paste</div>
<div class="a" style="left:138.8px;top:318.4px;width:135px;height:1px;background:#dcdcdc;"></div>
<svg class="a" style="left:112px;top:323.6px;" width="13.6" height="15.6" viewBox="0 0 13.6 15.6"><path d="M8.6 14.8H0.6V0.6H7L10.6 4.2V8" fill="none" stroke="#555555" stroke-width="1.1"/><path d="M0.6 0.6H7L10.6 4.2V14.8H0.6Z" fill="#fff"/><path d="M8.6 14.8H0.6V0.6H7L10.6 4.2V8" fill="none" stroke="#555555" stroke-width="1.1"/><path d="M6.8 0.4L10.8 4.4H6.8Z" fill="#555555"/><path d="M8.6 7.8H11.4V10H13.8V12.8H11.4V15.2H8.6V12.8H6.2V10H8.6Z" fill="#e9501a"/></svg>
<div class="t" style="left:138.30px;top:327.00px;font-size:11.6px;color:#333333;letter-spacing:-0.285px;">Insert Blank Page</div>
<div class="a" style="left:106.2px;top:342.8px;width:171.8px;height:25.6px;background:#fff;border:2px solid #b3111d;box-shadow:1px 2px 4px rgba(0,0,0,.5), inset 0 5px 4px -2px rgba(0,0,0,.22)"></div>
<div class="t" style="left:138.30px;top:349.00px;font-size:11.6px;color:#333333;">Duplicate</div>
<div class="t" style="left:138.30px;top:371.00px;font-size:11.6px;color:#333333;letter-spacing:-0.610px;">Set Page Size</div>
<svg class="a" style="left:270.8px;top:373.3px;" width="4" height="7" viewBox="0 0 4 7"><path d="M0 0L4 3.5L0 7Z" fill="#333"/></svg>
<div class="a" style="left:138.8px;top:392.2px;width:135px;height:1px;background:#dcdcdc;"></div>
<div class="t" style="left:138.30px;top:401.00px;font-size:11.6px;color:#333333;letter-spacing:-0.357px;">Print Pages...</div>
<div class="a" style="left:138.8px;top:422.2px;width:135px;height:1px;background:#dcdcdc;"></div>
<div class="t" style="left:138.30px;top:431.00px;font-size:11.6px;color:#333333;letter-spacing:-0.394px;">Crop Pages...</div>
<svg class="a" style="left:113.2px;top:450.8px;" width="14" height="14" viewBox="0 0 14 14"><path d="M4.8 0H9.2V1.4H4.8Z" fill="#e9501a"/><rect x="0.7" y="1.5" width="12.6" height="2.4" fill="none" stroke="#e9501a" stroke-width="1.4"/><path d="M2.2 4.6H11.8V13.1H2.2Z" fill="none" stroke="#e9501a" stroke-width="1.6"/><path d="M5.5 5.6V11.8M8.5 5.6V11.8" stroke="#e9501a" stroke-width="1.1"/></svg>
<div class="t" style="left:138.30px;top:453.00px;font-size:11.6px;color:#333333;letter-spacing:-0.365px;">Delete Pages...</div>
<div class="t" style="left:138.30px;top:475.00px;font-size:11.6px;color:#333333;letter-spacing:-0.459px;">Extract Pages...</div>
<div class="t" style="left:138.30px;top:497.00px;font-size:11.6px;color:#333333;letter-spacing:-0.669px;">OCR Pages...</div>
<svg class="a" style="left:112px;top:515.3px;" width="16" height="16" viewBox="0 0 16 16"><path d="M2.65 13.35A7 7 0 1 1 13.33 4.38" fill="none" stroke="#4a4a4a" stroke-width="1.1"/><path d="M14.4 6.9A7 7 0 0 1 2.65 13.35" fill="none" stroke="#4a4a4a" stroke-width="1.1" stroke-dasharray="1.5 1.3"/><path d="M14.6 6.2L15.4 2.6L11.2 5.4Z" fill="#4a4a4a"/><circle cx="7.6" cy="8.4" r="2.3" fill="none" stroke="#e9501a" stroke-width="1.8"/><path d="M7.6 4.6V5.6M7.6 11.2V12.2M3.8 8.4H4.8M10.4 8.4H11.4M4.9 5.7L5.6 6.4M9.6 10.4L10.3 11.1M4.9 11.1L5.6 10.4M9.6 6.4L10.3 5.7" stroke="#e9501a" stroke-width="1.5"/></svg>
<div class="t" style="left:138.30px;top:519.00px;font-size:11.6px;color:#333333;letter-spacing:-0.354px;">Rotate Pages...</div>
<div class="a" style="left:138.8px;top:540px;width:135px;height:1px;background:#dcdcdc;"></div>
<div class="t" style="left:138.30px;top:549.00px;font-size:11.6px;color:#333333;letter-spacing:-0.554px;">Redact Page(s)</div>
<div class="t" style="left:138.30px;top:571.00px;font-size:11.6px;color:#333333;letter-spacing:-0.376px;">Redact Page Range...</div>
<div class="a" style="left:138.8px;top:592px;width:135px;height:1px;background:#dcdcdc;"></div>
<div class="t" style="left:138.30px;top:601.00px;font-size:11.6px;color:#333333;letter-spacing:-0.118px;">Thumbnails</div>
<svg class="a" style="left:270.8px;top:603px;" width="4" height="7" viewBox="0 0 4 7"><path d="M0 0L4 3.5L0 7Z" fill="#333"/></svg>
</body></html>
